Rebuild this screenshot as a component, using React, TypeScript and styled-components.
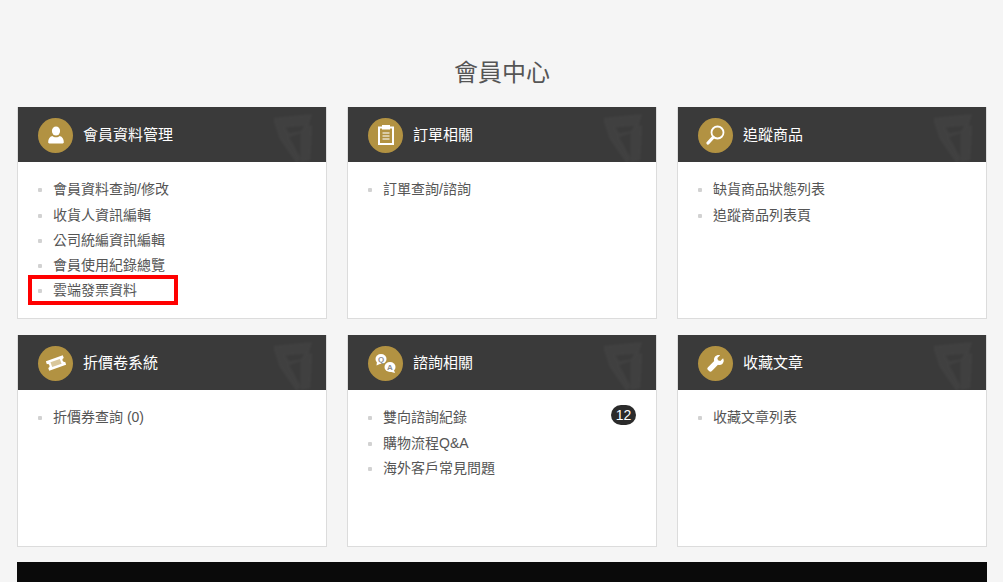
import React from "react";
import styled, { createGlobalStyle } from "styled-components";

const GlobalStyle = createGlobalStyle`
  html, body {
    margin: 0;
    padding: 0;
    background: #f5f5f5;
    overflow: hidden;
  }
  body {
    font-family: "Liberation Sans", "Noto Sans CJK TC", sans-serif;
  }
`;

const Page = styled.div`
  width: 1003px;
  height: 582px;
  padding: 0 16px 0 17px;
  box-sizing: border-box;
  overflow: hidden;
`;

const Title = styled.h1`
  margin: 0;
  padding-top: 57px;
  height: 50px;
  line-height: 32px;
  font-size: 24px;
  font-weight: 400;
  color: #555;
  text-align: center;
`;

const Grid = styled.div`
  display: grid;
  grid-template-columns: repeat(3, 310px);
  grid-auto-rows: 212px;
  column-gap: 20px;
  row-gap: 16px;
`;

const Card = styled.section`
  position: relative;
  background: #fff;
  border: 1px solid #dcdcdc;
  border-top: 0;
  box-sizing: border-box;
`;

const Header = styled.header`
  position: relative;
  display: flex;
  align-items: center;
  gap: 10px;
  height: 55px;
  padding: 1px 0 0 20px;
  box-sizing: border-box;
  background: #3a3a3a;
  overflow: hidden;
`;

const Badge = styled.span`
  display: flex;
  align-items: center;
  justify-content: center;
  width: 35px;
  height: 35px;
  border-radius: 50%;
  background: #b29242;
  color: #fff;
`;

const HeaderTitle = styled.h2`
  margin: 0 0 4px;
  font-size: 15px;
  font-weight: 400;
  color: #fff;
`;

const Watermark = styled.svg`
  position: absolute;
  right: 6px;
  top: 5px;
  opacity: 0.03;
  filter: blur(1px);
`;

const List = styled.ul`
  margin: 0;
  padding: 15.25px 0 0 35px;
  list-style: none;
`;

const Item = styled.li<{ $marked?: boolean }>`
  position: relative;
  height: 25.3px;
  line-height: 25.3px;
  font-size: 14px;
  color: #555;

  &::before {
    content: "";
    position: absolute;
    left: -15px;
    top: 11px;
    width: 4px;
    height: 4px;
    background: #d2d2d2;
    border-radius: 1px;
  }

  ${(p) =>
    p.$marked &&
    `
    &::after {
      content: "";
      position: absolute;
      left: -25px;
      top: -3.5px;
      width: 150px;
      height: 30px;
      border: 4px solid #f00;
      box-sizing: border-box;
    }
  `}
`;

const Count = styled.span`
  position: absolute;
  top: 0;
  right: 20px;
  width: 25px;
  height: 20px;
  border-radius: 10px;
  background: #2b2b2b;
  color: #fff;
  font-size: 14px;
  line-height: 20px;
  text-align: center;
`;

const Footer = styled.div`
  height: 40px;
  margin-top: 15px;
  background: #0a0a0a;
`;

const UserIcon = () => (
  <svg width="16" height="18" viewBox="0 0 18 20" fill="currentColor">
    <ellipse cx="9" cy="5.5" rx="4.6" ry="5" />
    <path d="M1.5 19.5c-.8 0-1.3-.5-1.3-1.3 0-3.6 1.6-6.6 4.6-7.2 1 1 2.5 1.6 4.2 1.6s3.200-.6 4.200-1.600c3 .6 4.600 3.600 4.600 7.200 0 .8-.5 1.300-1.300 1.300z" />
  </svg>
);

const ClipboardIcon = () => (
  <svg width="16" height="20" viewBox="0 0 16 20" fill="none" stroke="currentColor">
    <rect x="1" y="2.500" width="14" height="16.500" strokeWidth="2" />
    <rect x="4.500" y="0.500" width="7" height="3.500" fill="currentColor" strokeWidth="1" />
    <path d="M4.500 8h7M4.500 11h7M4.500 14h7" strokeWidth="1.400" opacity="0.7" />
  </svg>
);

const SearchIcon = () => (
  <svg width="19" height="20" viewBox="0 0 19 20" fill="none" stroke="currentColor">
    <circle cx="11.500" cy="7.500" r="6" strokeWidth="1.800" />
    <path d="M7 12.500L2 18" strokeWidth="3.200" strokeLinecap="round" />
  </svg>
);

const TicketIcon = () => (
  <svg width="20" height="16" viewBox="0 0 20 16">
    <g transform="rotate(-20 10 8)">
      <path d="M1 3h18v3a2 2 0 0 0 0 4v3H1v-3a2 2 0 0 0 0-4z" fill="currentColor" />
      <rect x="5" y="5.500" width="10" height="5" fill="#d9c79c" />
    </g>
  </svg>
);

const QaIcon = () => (
  <svg width="21" height="19" viewBox="0 0 21 19" fill="currentColor">
    <ellipse cx="6" cy="5" rx="5.500" ry="5" />
    <path d="M2 7.500L1.500 11.500 6 9.500z" />
    <ellipse cx="15" cy="13" rx="5.500" ry="5" />
    <path d="M18.500 15L20 19 14.500 17.500z" />
    <text x="6" y="8" fontSize="8" fontWeight="700" textAnchor="middle" fill="#8c8c8c">Q</text>
    <text x="15" y="16" fontSize="8" fontWeight="700" textAnchor="middle" fill="#8c8c8c">A</text>
  </svg>
);

const WrenchIcon = () => (
  <svg width="17" height="17" viewBox="0 0 22 22" fill="currentColor">
    <path d="M20.800 4.200l-3.600 3.500-3-.8-.8-3L17 .4c-2.400-.7-5 0-6.500 1.700-1.400 1.500-1.900 3.700-1.200 5.700L1.300 15.700a2.600 2.600 0 0 0 0 3.700l1.300 1.300a2.600 2.600 0 0 0 3.700 0l7.900-8c2 .7 4.200.2 5.700-1.200 1.800-1.700 2.400-4.900.9-7.300z" />
  </svg>
);

const Crest = () => (
  <Watermark width="50" height="50" viewBox="0 0 52 52" fill="#fff">
    <path d="M4 6l40 -4 -4 12 -24 2 4 6 12 -2 4 -6 8 0 -2 36 -10 2 0 -30 -12 4 12 22 -4 6 -18 -26 -6 -18z" />
  </Watermark>
);

const sections = [
  {
    title: "會員資料管理",
    icon: <UserIcon />,
    items: ["會員資料查詢/修改", "收貨人資訊編輯", "公司統編資訊編輯", "會員使用紀錄總覽", "雲端發票資料"],
    marked: 4,
  },
  { title: "訂單相關", icon: <ClipboardIcon />, items: ["訂單查詢/諮詢"] },
  { title: "追蹤商品", icon: <SearchIcon />, items: ["缺貨商品狀態列表", "追蹤商品列表頁"] },
  { title: "折價卷系統", icon: <TicketIcon />, items: ["折價券查詢 (0)"] },
  {
    title: "諮詢相關",
    icon: <QaIcon />,
    items: ["雙向諮詢紀錄", "購物流程Q&A", "海外客戶常見問題"],
    count: 12,
  },
  { title: "收藏文章", icon: <WrenchIcon />, items: ["收藏文章列表"] },
];

export default function App() {
  return (
    <Page>
      <GlobalStyle />
      <Title>會員中心</Title>
      <Grid>
        {sections.map((s) => (
          <Card key={s.title}>
            <Header>
              <Badge>{s.icon}</Badge>
              <HeaderTitle>{s.title}</HeaderTitle>
              <Crest />
            </Header>
            <List>
              {s.items.map((item, i) => (
                <Item key={item} $marked={s.marked === i}>
                  {item}
                  {s.count && i === 0 ? <Count>{s.count}</Count> : null}
                </Item>
              ))}
            </List>
          </Card>
        ))}
      </Grid>
      <Footer />
    </Page>
  );
}
